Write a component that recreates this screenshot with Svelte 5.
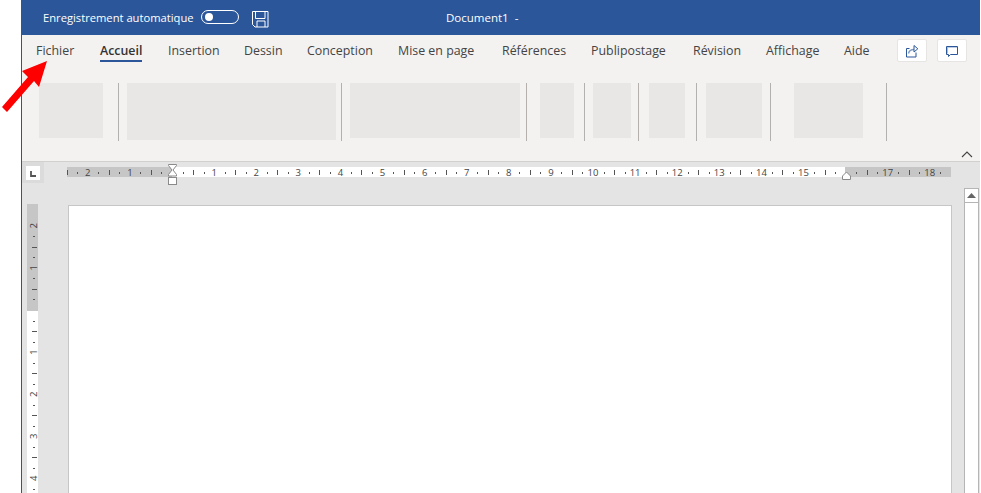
<script>
  // tab label and where the next one starts, as measured from the left of the strip
  const starts = [36, 100, 168, 244, 307, 398, 502, 591, 693, 766, 844, 893];
  const names = ['Fichier', 'Accueil', 'Insertion', 'Dessin', 'Conception', 'Mise en page', 'Références', 'Publipostage', 'Révision', 'Affichage', 'Aide'];
  const tabs = names.map((name, i) => ({ name, w: starts[i + 1] - starts[i] }));

  // ribbon placeholders: x, width, height (sep = 1px divider)
  const raw = [
    [39, 64, 55], [118, 1, 58, 1], [127, 209, 57], [341, 1, 58, 1], [350, 170, 55], [526, 1, 58, 1],
    [540, 34, 55], [584, 1, 58, 1], [593, 38, 55], [638, 1, 58, 1], [649, 36, 55], [696, 1, 58, 1],
    [706, 56, 55], [770, 1, 58, 1], [794, 69, 55], [886, 1, 58, 1]
  ];
  const groups = raw.map((g, i) => ({
    w: g[1], h: g[2], sep: !!g[3],
    gap: i === 0 ? 0 : g[0] - raw[i - 1][0] - raw[i - 1][1]
  }));

  const CM = 42.1;
  const ZERO_X = 172 - 67;
  const ZERO_Y = 310 - 204;

  // quarter cm marks along a ruler, n from start to end
  function marks(from, to) {
    const out = [];
    for (let i = from; i <= to; i++) {
      out.push({ q: i, cm: i / 4, kind: i % 4 === 0 ? 'num' : i % 2 === 0 ? 'tick' : 'dot' });
    }
    return out;
  }
  const hMarks = marks(-10, 73);
  const vMarks = marks(-8, 17);
</script>

<div class="app">
  <div class="window">
    <header class="title">
      <span class="auto">Enregistrement automatique</span>
      <span class="toggle"><i></i></span>
      <svg class="save" width="17" height="17" viewBox="0 0 17 17" fill="none" stroke="#fff" stroke-width="1">
        <path d="M.5.500h15.500v15.500H3l-2.500-2.500z" />
        <path d="M3.500.500v7h9.500v-7M5 16v-6h8v6" />
      </svg>
      <span class="doc">Document1&nbsp; -</span>
    </header>

    <section class="ribbon">
      <nav class="tabs">
        {#each tabs as t}
          <span class="slot" style="width:{t.w}px"><span class="tab" class:active={t.name === 'Accueil'}>{t.name}</span></span>
        {/each}
        <div class="actions">
          <button aria-label="Partager">
            <svg width="14" height="14" viewBox="0 0 14 14" fill="none" stroke="#2b579a" stroke-width="1">
              <path d="M4.500 4.500H1.500v8.500h9.500V8.500" />
              <path d="M3.500 9.500C4 7 6.500 5.500 9 5.500" stroke="#7f9ac4" stroke-width="1.400" />
              <path d="M9 1.500l3.800 3.300L9 8z" fill="#fff" />
            </svg>
          </button>
          <button aria-label="Commentaires">
            <svg width="14" height="14" viewBox="0 0 14 14" fill="none">
              <path d="M2.300 3v6.500M2 3h10" stroke="#a9bcd8" stroke-width="1.500" />
              <path d="M1.500 2.500h11v8H5.500l-2 2v-2h-2z" stroke="#2b579a" stroke-width="1" />
            </svg>
          </button>
        </div>
      </nav>
      <div class="groups">
        {#each groups as g}
          <div class={g.sep ? 'sep' : 'block'} style="width:{g.w}px;height:{g.h}px;margin-left:{g.gap}px"></div>
        {/each}
      </div>
      <div class="collapse">
        <svg width="12" height="7" viewBox="0 0 12 7" fill="none" stroke="#444" stroke-width="1.100"><path d="M1 6l5-5 5 5" /></svg>
      </div>
    </section>

    <section class="workspace">
      <div class="hrow">
        <div class="corner"><svg width="14" height="14" viewBox="0 0 14 14"><path d="M5 5v5h5" fill="none" stroke="#555" stroke-width="1.800" /></svg></div>
        <svg class="hruler" width="885" height="24" viewBox="0 0 885 24">
          <rect x="0" y="5" width="884" height="10" fill="#c6c6c6" />
          <rect x={ZERO_X} y="5" width="673" height="10" fill="#fff" />
          {#each hMarks as m}
            {@const x = ZERO_X + m.cm * CM}
            {#if m.kind === 'tick'}
              <rect x={Math.round(x)} y="8" width="1" height="5" fill="#555" />
            {:else if m.kind === 'dot'}
              <rect x={Math.round(x)} y="10" width="1" height="2" fill="#555" />
            {:else if m.cm !== 0 && m.cm !== 16}
              <text x={x} y="14" text-anchor="middle">{Math.abs(m.cm)}</text>
            {/if}
          {/each}
          <path d="M101.500 2.500h8v1l-3.500 4.500 3.500 4.500v1.500h-8v-1.500l3.500-4.500-3.500-4.500z" fill="#fff" stroke="#8a8a8a" />
          <rect x="101.500" y="15.500" width="8" height="7" fill="#fff" stroke="#8a8a8a" />
          <path d="M775.500 17.500v-3.500l4-4 4 4v3.500z" fill="#fff" stroke="#8a8a8a" />
        </svg>
      </div>
      <div class="body">
        <svg class="vruler" width="11" height="300" viewBox="0 0 11 300">
          <rect width="11" height="107" fill="#c6c6c6" />
          <rect y="107" width="11" height="193" fill="#fff" />
          {#each vMarks as m}
            {@const y = ZERO_Y + m.cm * CM}
            {#if m.kind === 'tick'}
              <rect x="5" y={Math.round(y)} width="5" height="1" fill="#555" />
            {:else if m.kind === 'dot'}
              <rect x="6" y={Math.round(y)} width="2" height="1" fill="#555" />
            {:else if m.cm !== 0}
              <text transform="translate(10 {y}) rotate(-90)" text-anchor="middle">{Math.abs(m.cm)}</text>
            {/if}
          {/each}
        </svg>
        <div class="page"></div>
        <div class="scroll">
          <div class="up"><svg width="9" height="5" viewBox="0 0 9 5"><path d="M4.500 0l4.500 5H0z" fill="#666" /></svg></div>
          <div class="track"></div>
        </div>
      </div>
    </section>
  </div>

  <svg class="arrow" width="50" height="54" viewBox="0 60 50 54">
    <path d="M47 61L22 71l6 6L2 107l5 5 27-31 5 6z" fill="#fe0000" />
  </svg>
</div>

<style>
  :global(body) { margin: 0; background: #fff; }
  .app {
    position: relative;
    width: 981px;
    height: 493px;
    overflow: hidden;
    padding-left: 21px;
    box-sizing: border-box;
    background: #fff;
    font-family: "Open Sans", "Noto Sans", sans-serif;
  }
  .window {
    width: 958px;
    height: 493px;
    border-left: 1px solid #2b579a;
    display: flex;
    flex-direction: column;
    overflow: hidden;
  }
  .title {
    height: 35px;
    flex: none;
    background: #2b579a;
    color: #fff;
    font-size: 11.500px;
    display: flex;
    align-items: flex-start;
    padding: 10px 0 0 21px;
    box-sizing: border-box;
  }
  .auto { line-height: 16px; width: 158px; white-space: nowrap; font-size: 11.200px; }
  .toggle {
    width: 38px;
    height: 14px;
    box-sizing: border-box;
    border: 1.500px solid #fff;
    border-radius: 8px;
    display: flex;
    align-items: center;
    padding-left: 3px;
  }
  .toggle i { width: 8px; height: 8px; border-radius: 50%; background: #fff; display: block; }
  .save { margin: 1px 0 0 13px; }
  .doc { margin-left: 177px; line-height: 16px; }

  .ribbon {
    height: 126px;
    flex: none;
    background: #f3f2f1;
    display: flex;
    flex-direction: column;
  }
  .tabs {
    height: 35px;
    flex: none;
    display: flex;
    align-items: flex-start;
    padding: 0 13px 0 14px;
    font-size: 12.400px;
    color: #444;
  }
  .slot { flex: none; display: block; }
  .tab { display: inline-block; line-height: 31px; height: 25px; padding-bottom: 0; white-space: nowrap; }
  .tab.active { font-weight: 600; color: #333; border-bottom: 2.500px solid #2b579a; }
  .actions { margin-left: auto; display: flex; gap: 10px; padding-top: 4px; }
  .actions button {
    width: 30px;
    height: 23px;
    padding: 0;
    background: #fff;
    border: 1px solid #e6e5e3;
    border-radius: 2px;
    display: flex;
    align-items: center;
    justify-content: center;
  }
  .groups {
    height: 58px;
    flex: none;
    margin-top: 13px;
    padding-left: 17px;
    display: flex;
    align-items: flex-start;
  }
  .block { background: #e8e7e5; flex: none; }
  .sep { background: #b3b0ad; flex: none; }
  .collapse {
    display: flex;
    justify-content: flex-end;
    padding: 10px 7px 0 0;
  }

  .workspace {
    flex: 1;
    background: #e4e4e4;
    border-top: 1px solid #d2d0ce;
    min-height: 0;
    overflow: hidden;
  }
  .hrow { display: flex; height: 24px; }
  .corner {
    width: 22px;
    height: 21px;
    background: #dbdbdb;
    display: flex;
    align-items: center;
    justify-content: center;
    flex: none;
  }
  .corner svg { background: #fff; }
  .hruler { margin-left: 23px; flex: none; }
  text { font-size: 9.500px; fill: #444; font-family: "Open Sans", sans-serif; }
  .body { display: flex; align-items: flex-start; padding-left: 5px; }
  .vruler { margin-top: 18px; flex: none; overflow: visible; }
  .page {
    width: 884px;
    height: 300px;
    margin: 19px 0 0 30px;
    box-sizing: border-box;
    background: #fff;
    border: 1px solid #c6c6c6;
    border-bottom: 0;
    flex: none;
  }
  .scroll { width: 15px; margin: 2px 0 0 12px; flex: none; }
  .up {
    height: 15px;
    box-sizing: border-box;
    background: #fff;
    border: 1px solid #b5b5b5;
    display: flex;
    align-items: center;
    justify-content: center;
  }
  .track {
    height: 300px;
    background: #fff;
    border: 1px solid #b5b5b5;
    border-top: 0;
    box-sizing: border-box;
  }
  .arrow { position: absolute; left: 0; top: 60px; }
</style>
